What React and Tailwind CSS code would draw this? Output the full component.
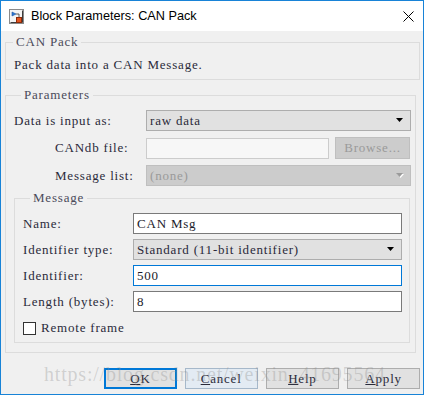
import React from 'react';

const body = "font-['Liberation_Serif',serif] text-[13px] leading-[14px] tracking-[0.8px]";

function Arrow({ disabled }) {
  return (
    <svg width="8" height="5" viewBox="0 0 8 5" className="shrink-0">
      {disabled && <path d="M1 1 L8 1 L4.5 5 Z" fill="#ffffff" />}
      <path d="M0 0 L7 0 L3.5 4 Z" fill={disabled ? '#9a9a9a' : '#000000'} />
    </svg>
  );
}

function Dropdown({ value, width, disabled }) {
  return (
    <div
      className={`h-[21px] flex items-center justify-between pl-[3px] pr-[6px] border ${
        disabled ? 'bg-[#cccccc] border-[#bfbfbf] text-[#9a9a9a]' : 'bg-[#e1e1e1] border-[#adadad] text-[#2a2a3a]'
      }`}
      style={{ width }}
    >
      <span>{value}</span>
      <Arrow disabled={disabled} />
    </div>
  );
}

function TextBox({ value, focused }) {
  return (
    <div
      className={`w-[269px] h-[21px] flex items-center pl-[3px] bg-white border ${
        focused ? 'border-[#0078d7]' : 'border-[#7a7a7a]'
      } text-[#1a1a2a]`}
    >
      {value}
    </div>
  );
}

function Legend({ children }) {
  return <legend className="ml-[7px] px-[3px] leading-[14px] text-[#4a4a5a]">{children}</legend>;
}

function Button({ children, className = '' }) {
  return (
    <div className={`w-[73px] h-[21px] flex items-center justify-center ${className}`}>{children}</div>
  );
}

function BlockIcon() {
  return (
    <svg width="15" height="15" viewBox="0 0 15 15">
      <rect x="0.5" y="0.5" width="14" height="14" fill="#f4f4f4" stroke="#8a8a8a" />
      <path d="M1.5 13.5 L13.5 13.5 L13.5 1.5" fill="none" stroke="#3c3c3c" />
      <path d="M3 3 L3 7 L7 5 Z" fill="#2b7bd6" stroke="#1b4f9a" strokeWidth="0.6" />
      <path d="M7 5 L10 5 L10 8" fill="none" stroke="#333" strokeWidth="0.8" />
      <rect x="7.5" y="8.5" width="5" height="5" fill="#e2541e" stroke="#8a2a0a" />
    </svg>
  );
}

export default function App() {
  return (
    <div className={`relative w-[424px] h-[395px] border border-[#1883d7] bg-[#f0f0f0] flex flex-col ${body}`}>
      {/* Title bar */}
      <div className="h-[30px] bg-white flex items-center shrink-0">
        <div className="ml-[8px] mt-[1px]">
          <BlockIcon />
        </div>
        <span className="ml-[7px] font-['Liberation_Sans',sans-serif] text-[12.7px] tracking-[0px] text-black">
          Block Parameters: CAN Pack
        </span>
        <svg width="11" height="11" viewBox="0 0 11 11" className="ml-auto mr-[9px]">
          <path d="M0.5 0.5 L10.5 10.5 M10.5 0.5 L0.5 10.5" stroke="#000" strokeWidth="1" />
        </svg>
      </div>

      <div className="flex flex-col pl-[4px] pr-[3px]">
        {/* CAN Pack */}
        <fieldset className="mt-[4px] border border-[#dcdcdc]">
          <Legend>CAN Pack</Legend>
          <div className="pl-[8px] pt-[9px] pb-[7px] text-[#2a2a3a]">Pack data into a CAN Message.</div>
        </fieldset>

        {/* Parameters */}
        <fieldset className="mt-[8px] mr-[4px] border border-[#dcdcdc] pl-[8px] pr-[4px] pb-[9px]">
          <Legend>Parameters</Legend>
          <div className="flex items-center mt-[8px]">
            <div className="w-[132px] text-[#2a2a3a]">Data is input as:</div>
            <Dropdown value="raw data" width="265px" />
          </div>
          <div className="flex items-center mt-[6px]">
            <div className="w-[132px] pl-[41px] text-[#2a2a3a]">CANdb file:</div>
            <div className="w-[183px] h-[21px] bg-[#f7f7f7] border border-[#cccccc]" />
            <div className="ml-[6px] w-[75px] h-[22px] flex items-center justify-center bg-[#cccccc] border border-[#bfbfbf] text-[#9a9a9a]">
              Browse...
            </div>
          </div>
          <div className="flex items-center mt-[6px]">
            <div className="w-[132px] pl-[41px] text-[#2a2a3a]">Message list:</div>
            <Dropdown value="(none)" width="265px" disabled />
          </div>

          {/* Message */}
          <fieldset className="mt-[5px] mr-[1px] border border-[#dcdcdc] pl-[8px] pb-[7px]">
            <Legend>Message</Legend>
            <div className="flex flex-col gap-[5px] mt-[8px] text-[#2a2a3a]">
              <div className="flex items-center">
                <div className="w-[110px]">Name:</div>
                <TextBox value="CAN Msg" />
              </div>
              <div className="flex items-center">
                <div className="w-[110px]">Identifier type:</div>
                <Dropdown value="Standard (11-bit identifier)" width="269px" />
              </div>
              <div className="flex items-center">
                <div className="w-[110px]">Identifier:</div>
                <TextBox value="500" focused />
              </div>
              <div className="flex items-center">
                <div className="w-[110px]">Length (bytes):</div>
                <TextBox value="8" />
              </div>
              <div className="flex items-center mt-[4px]">
                <div className="w-[13px] h-[13px] bg-white border border-[#333333]" />
                <span className="ml-[5px]">Remote frame</span>
              </div>
            </div>
          </fieldset>
        </fieldset>

        {/* Buttons */}
        <div className="flex items-center mt-[15px] pl-[99px] gap-[8px] text-[#2a2a3a]">
          <Button className="bg-[#e1e1e1] border-2 border-[#0078d7]">
            <span className="underline">O</span>K
          </Button>
          <Button className="bg-[#e3ebf3] border border-[#a6b8ca]">
            <span className="underline">C</span>ancel
          </Button>
          <Button className="w-[74px] bg-[#e1e1e1] border border-[#adadad]">
            <span className="underline">H</span>elp
          </Button>
          <Button className="bg-[#e1e1e1] border border-[#adadad]">
            <span className="underline">A</span>pply
          </Button>
        </div>
      </div>

      {/* Watermark */}
      <div className="absolute left-[43px] top-[362px] pointer-events-none font-['Liberation_Serif',serif] text-[20px] leading-[22px] tracking-[0.8px] text-[rgba(140,140,140,0.32)]">
        https://blog.csdn.net/weixin_41695564
      </div>
    </div>
  );
}
